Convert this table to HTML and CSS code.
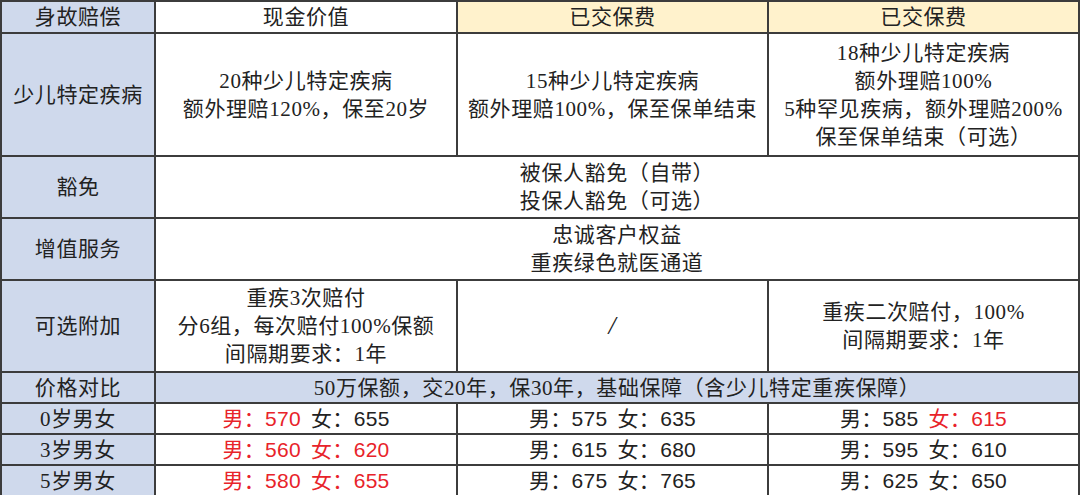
FILE: index.html
```html
<!DOCTYPE html>
<html lang="zh">
<head>
<meta charset="utf-8">
<link rel="stylesheet" href="styles.css">
</head>
<body>
<table class="cmp">
  <colgroup>
    <col class="c1"><col class="c2"><col class="c3"><col class="c4">
  </colgroup>
  <tr class="r-head">
    <td class="lab">身故赔偿</td>
    <td>现金价值</td>
    <td class="yel">已交保费</td>
    <td class="yel">已交保费</td>
  </tr>
  <tr class="r-kid">
    <td class="lab">少儿特定疾病</td>
    <td>20种少儿特定疾病<br>额外理赔120%，保至20岁</td>
    <td>15种少儿特定疾病<br>额外理赔100%，保至保单结束</td>
    <td>18种少儿特定疾病<br>额外理赔100%<br>5种罕见疾病，额外理赔200%<br>保至保单结束（可选）</td>
  </tr>
  <tr class="r-two">
    <td class="lab">豁免</td>
    <td colspan="3">被保人豁免（自带）<br>投保人豁免（可选）</td>
  </tr>
  <tr class="r-two">
    <td class="lab">增值服务</td>
    <td colspan="3">忠诚客户权益<br>重疾绿色就医通道</td>
  </tr>
  <tr class="r-opt">
    <td class="lab">可选附加</td>
    <td>重疾3次赔付<br>分6组，每次赔付100%保额<br>间隔期要求：1年</td>
    <td class="slash">/</td>
    <td>重疾二次赔付，100%<br>间隔期要求：1年</td>
  </tr>
  <tr class="r-one blue">
    <td class="lab">价格对比</td>
    <td colspan="3">50万保额，交20年，保30年，基础保障（含少儿特定重疾保障）</td>
  </tr>
  <tr class="r-one price">
    <td class="lab">0岁男女</td>
    <td><span class="red">男：570</span> 女：655</td>
    <td>男：575 女：635</td>
    <td>男：585 <span class="red">女：615</span></td>
  </tr>
  <tr class="r-one price">
    <td class="lab">3岁男女</td>
    <td><span class="red">男：560 女：620</span></td>
    <td>男：615 女：680</td>
    <td>男：595 女：610</td>
  </tr>
  <tr class="r-one price">
    <td class="lab">5岁男女</td>
    <td><span class="red">男：580 女：655</span></td>
    <td>男：675 女：765</td>
    <td>男：625 女：650</td>
  </tr>
</table>
</body>
</html>
```

FILE: styles.css
```css
html, body {
  margin: 0;
  padding: 0;
  background: #ffffff;
}

.cmp {
  border-collapse: collapse;
  table-layout: fixed;
  width: 1078px;
  font-family: "Liberation Serif", "Noto Sans CJK SC", serif;
  font-size: 21px;
  color: #222222;
}

.c1 { width: 154px; }
.c2 { width: 302px; }
.c3 { width: 311px; }
.c4 { width: 311px; }

.cmp td {
  border: 2px solid #3c3c3c;
  text-align: center;
  vertical-align: middle;
  padding: 0;
  line-height: 28px;
  letter-spacing: 0.6px;
}

.lab {
  background: #cfd9ec;
}

.yel {
  background: #fff2cc;
}

.blue td {
  background: #cfd9ec;
}

.r-head td { height: 30px; line-height: 26px; }
.r-kid td { height: 121px; }
.r-two td { height: 60px; }
.r-opt td { height: 90px; }
.r-one td { height: 29px; line-height: 26px; }

.slash {
  font-size: 26px;
  font-style: italic;
}

.price td:not(.lab) {
  font-family: "Liberation Sans", "Noto Sans CJK SC", sans-serif;
  word-spacing: 4px;
  letter-spacing: 0.3px;
}

.price td {
  border-top-color: #777777;
}

.red {
  color: #e8232a;
}
```
